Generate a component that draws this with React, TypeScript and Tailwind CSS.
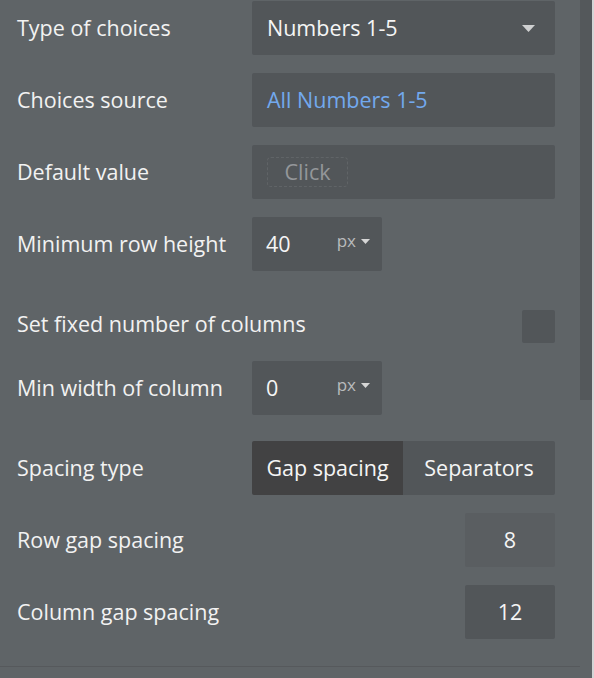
import React from "react";

const font = { fontFamily: '"Open Sans", "Noto Sans", sans-serif' };

function Label({ children }: { children: React.ReactNode }) {
  return <div className="pl-[17px] text-[21.5px] text-[#f2f2f2] leading-[54px] flex-1">{children}</div>;
}

function Caret({ small }: { small?: boolean }) {
  return small ? (
    <svg width="9" height="5" viewBox="0 0 9 5" className="block">
      <path d="M0 0 H9 L4.5 5 Z" fill="#d6d6d6" />
    </svg>
  ) : (
    <svg width="13" height="7" viewBox="0 0 13 7" className="block">
      <path d="M0 0 H13 L6.5 7 Z" fill="#cfd0d1" />
    </svg>
  );
}

function PxInput({ value }: { value: string }) {
  return (
    <div className="w-[130px] h-[54px] bg-[#525659] rounded-[2px] flex items-center pl-[14px] pr-[12px]">
      <span className="text-[21.5px] text-[#f5f5f5] flex-1">{value}</span>
      <span className="text-[17px] text-[#b9bbbc] mr-[5px] -mt-[6px]">px</span>
      <span className="-mt-[6px]"><Caret small /></span>
    </div>
  );
}

export default function App() {
  return (
    <div className="w-[594px] h-[678px] bg-[#5f6467] relative overflow-hidden" style={font}>
      <div className="w-[580px] pt-[1px] flex flex-col">
        <div className="flex items-center h-[54px]">
          <Label>Type of choices</Label>
          <div className="w-[303px] h-[54px] mr-[25px] bg-[#525659] rounded-[2px] flex items-center pl-[15px] pr-[20px]">
            <span className="text-[21.5px] text-[#f5f5f5] flex-1">Numbers 1-5</span>
            <Caret />
          </div>
        </div>
        <div className="flex items-center h-[54px] mt-[18px]">
          <Label>Choices source</Label>
          <div className="w-[303px] h-[54px] mr-[25px] bg-[#525659] rounded-[2px] flex items-center pl-[15px]">
            <span className="text-[21.5px] text-[#72a9ee]">All Numbers 1-5</span>
          </div>
        </div>
        <div className="flex items-center h-[54px] mt-[18px]">
          <Label>Default value</Label>
          <div className="w-[303px] h-[54px] mr-[25px] bg-[#525659] rounded-[2px] flex items-center pl-[15px]">
            <span className="w-[81px] h-[30px] border border-dashed border-[#606467] rounded-[4px] flex items-center justify-center text-[21.5px] text-[#94979a]">Click</span>
          </div>
        </div>
        <div className="flex items-center h-[54px] mt-[18px]">
          <Label>Minimum row height</Label>
          <div className="w-[328px]">
            <PxInput value="40" />
          </div>
        </div>
        <div className="flex items-end h-[54px] mt-[18px]">
          <div className="pl-[17px] text-[21.5px] text-[#f2f2f2] leading-[38px] flex-1">Set fixed number of columns</div>
          <div className="w-[33px] h-[33px] bg-[#525659] rounded-[2px] mr-[25px]" />
        </div>
        <div className="flex items-center h-[54px] mt-[18px]">
          <Label>Min width of column</Label>
          <div className="w-[328px]">
            <PxInput value="0" />
          </div>
        </div>
        <div className="flex items-center h-[54px] mt-[26px]">
          <Label>Spacing type</Label>
          <div className="w-[303px] h-[54px] mr-[25px] flex rounded-[2px] overflow-hidden">
            <div className="w-[151px] bg-[#424243] flex items-center justify-center text-[21.5px] text-[#f5f5f5]">Gap spacing</div>
            <div className="flex-1 bg-[#525659] flex items-center justify-center text-[21.5px] text-[#f5f5f5]">Separators</div>
          </div>
        </div>
        <div className="flex items-center h-[54px] mt-[18px]">
          <Label>Row gap spacing</Label>
          <div className="w-[90px] h-[54px] mr-[25px] bg-[#5a5e61] rounded-[2px] flex items-center justify-center text-[21.5px] text-[#f5f5f5]">8</div>
        </div>
        <div className="flex items-center h-[54px] mt-[18px]">
          <Label>Column gap spacing</Label>
          <div className="w-[90px] h-[54px] mr-[25px] bg-[#525659] rounded-[2px] flex items-center justify-center text-[21.5px] text-[#f5f5f5]">12</div>
        </div>
        <div className="mt-[27px] h-[1px] bg-[#56595c]" />
      </div>
      <div className="absolute left-[580px] top-0 w-[12px] h-[400px] bg-[#54585b]" />
      <div className="absolute left-[592px] top-0 w-[2px] h-full bg-[#d4d5d6]" />
    </div>
  );
}
